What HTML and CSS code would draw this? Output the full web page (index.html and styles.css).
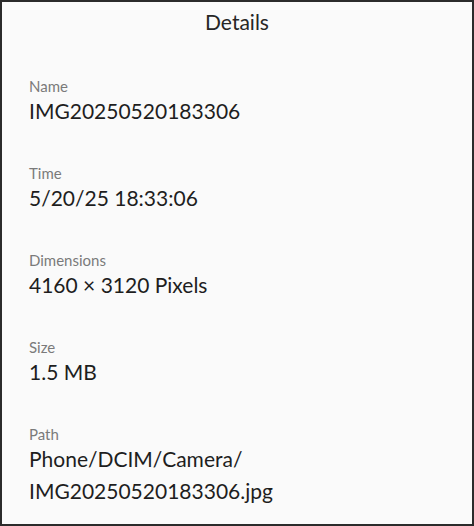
FILE: index.html
```html
<!DOCTYPE html>
<html>
<head>
<meta charset="utf-8">
<link rel="stylesheet" href="styles.css">
</head>
<body>
<div class="panel">
  <div class="title">Details</div>
  <div class="item">
    <div class="label">Name</div>
    <div class="value">IMG20250520183306</div>
  </div>
  <div class="item">
    <div class="label">Time</div>
    <div class="value">5/20/25 18:33:06</div>
  </div>
  <div class="item">
    <div class="label">Dimensions</div>
    <div class="value">4160 × 3120 Pixels</div>
  </div>
  <div class="item">
    <div class="label">Size</div>
    <div class="value">1.5 MB</div>
  </div>
  <div class="item">
    <div class="label">Path</div>
    <div class="value">Phone/DCIM/Camera/<br>IMG20250520183306.jpg</div>
  </div>
</div>
</body>
</html>
```
FILE: styles.css
```css
html, body {
  margin: 0;
  padding: 0;
}
body {
  width: 474px;
  height: 526px;
  background: #2b2b2b;
  font-family: "Lato", "Noto Sans", sans-serif;
}
.panel {
  box-sizing: border-box;
  width: 474px;
  height: 526px;
  border: 2px solid #2b2b2b;
  background: #fafafa;
  padding: 0 27px;
  display: flex;
  flex-direction: column;
}
.title {
  text-align: center;
  font-size: 21px;
  color: #262626;
  line-height: 28px;
  margin-top: 6px;
  margin-bottom: 41px;
}
.item {
  display: flex;
  flex-direction: column;
  margin-bottom: 37px;
}
.label {
  font-size: 15px;
  color: #7a7a7a;
  line-height: 18px;
}
.value {
  font-size: 21px;
  color: #1e1e1e;
  line-height: 32px;
}
```
